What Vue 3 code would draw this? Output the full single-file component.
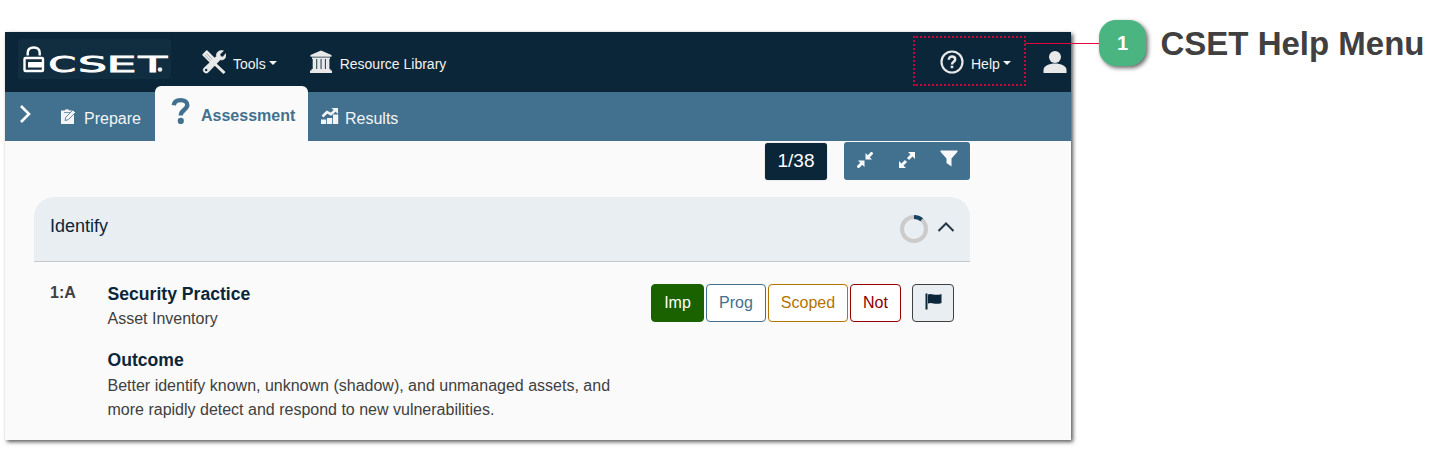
<script setup>
const letters = [
  { ch: 'C', x: 30.5, w: 27.5 },
  { ch: 'S', x: 60, w: 29 },
  { ch: 'E', x: 88.5, w: 30 },
  { ch: 'T', x: 120.5, w: 28.5 },
]
const answers = [
  { label: 'Imp', kind: 'imp' },
  { label: 'Prog', kind: 'prog' },
  { label: 'Scoped', kind: 'scoped' },
  { label: 'Not', kind: 'not' },
]
</script>

<template>
  <main class="page">
    <section class="window">
      <header class="topbar">
        <svg class="logo" width="153" height="40" viewBox="0 0 153 40">
          <rect width="153" height="40" rx="3" fill="#112d40" />
          <path d="M9.700 16.500V14q0-5.500 6-5.500t6 5.500v2.500" fill="none" stroke="#fff" stroke-width="2.400" />
          <rect x="6.500" y="19" width="18.500" height="13" rx="1" fill="none" stroke="#fff" stroke-width="2.400" />
          <rect x="10" y="23" width="15" height="5.500" rx=".5" fill="#fff" />
          <text v-for="l in letters" :key="l.ch" :x="l.x" y="32.500" :textLength="l.w" lengthAdjust="spacingAndGlyphs" class="mark">{{ l.ch }}</text>
          <circle cx="142" cy="30.500" r="2.300" fill="#e8edf0" />
        </svg>
        <div class="item tools">
          <svg width="24" height="24" viewBox="0 0 24 24">
            <path d="M1.200 4.800 4.800 1.200 14 10.500 10.500 14z" fill="#e9e9e9" stroke="#e9e9e9" stroke-width="1.800" stroke-linejoin="round" />
            <path d="m4.500 3.500 6 6M2.800 5l6 6" stroke="#7d8b95" stroke-width=".6" />
            <path d="m13 14 9.500 9" stroke="#e9e9e9" stroke-width="3" />
            <path d="M21.500.8 18 4.300l.6 2.200 2.200.6 3-3.500c1 4-1.800 7-5.600 6.200L6.300 22.200c-2.700 2.600-7-1.500-4.300-4.300L14.500 6.300C13.700 2.600 17.500-.3 21.500.8z" fill="#e9e9e9" stroke="#e9e9e9" stroke-width=".6" />
            <circle cx="4.200" cy="20" r="1.200" fill="#0b2639" />
          </svg>
          <span>Tools</span><i class="caret"></i>
        </div>
        <div class="item library">
          <svg width="24" height="24" viewBox="0 0 24 24" fill="#e9e9e9">
            <path d="M12 .5 22.500 5v1.800h-21V5zM3 7.500h18V9H3zM3.700 9h3.600v10H3.700zm4.500 0h3.400v10H8.200zm4.300 0h3.400v10h-3.400zm4.300 0h3.600v10h-3.600zM2.500 19h19v1.500H23V23H1v-2.500h1.500z" />
          </svg>
          <span>Resource Library</span>
        </div>
        <div class="help">
          <svg width="24" height="24" viewBox="0 0 24 24" fill="none" stroke="#e9e9e9">
            <circle cx="12" cy="12" r="10.500" stroke-width="2.200" />
            <path d="M8.800 9.700c0-2 1.300-3.100 3.200-3.100s3.200 1.200 3.200 2.800c0 2.400-3.200 2.300-3.200 5" stroke-width="2.500" />
            <path d="M12 15.700v2.500" stroke-width="2.600" />
          </svg>
          <span>Help</span><i class="caret"></i>
        </div>
        <svg class="user" width="24" height="24" viewBox="0 0 24 24" fill="#e9e9e9">
          <circle cx="12" cy="7" r="6" /><path d="M.5 23v-3C.5 16 6 13.500 12 13.500S23.500 16 23.500 20v3z" />
        </svg>
      </header>

      <nav class="tabs">
        <svg class="chev" width="14" height="20" viewBox="0 0 14 20"><path d="m2 2 8 8-8 8" fill="none" stroke="#fff" stroke-width="2.600" /></svg>
        <div class="tab prepare">
          <svg width="17" height="17" viewBox="0 0 17 17">
            <path d="M1 2.500h3.500a2.700 2 0 0 1 5 0H14V16H1z" fill="#f4f4f4" />
            <path d="m5 12.500.8-3.300L13 2l2.500 2.500-7.200 7.200z" fill="#f4f4f4" stroke="#41718f" stroke-width=".8" />
            <path d="M4 4.500h6" stroke="#41718f" stroke-width=".7" />
          </svg>
          <span>Prepare</span>
        </div>
        <div class="tab active">
          <svg width="20" height="28" viewBox="0 0 20 28" fill="none">
            <path d="M2.800 8.200c.4-3.500 3-5.100 6.800-5.100 4.200 0 6.700 1.900 6.700 5 0 4.700-6.500 4.700-6.500 10.400" stroke="#41718f" stroke-width="4.400" />
            <circle cx="9.800" cy="23.900" r="3.100" fill="#41718f" />
          </svg>
          <span>Assessment</span>
        </div>
        <div class="tab results">
          <svg width="18" height="17" viewBox="0 0 18 17" fill="#f4f4f4">
            <path d="M0 11.500h5.200V16H0zm6-1.500h5.200v6H6zm6-3.500h5.200V16H12z" />
            <path d="m1.500 8.500 4.500-4.500 4 2.200 4-3.700" fill="none" stroke="#f4f4f4" stroke-width="2.600" /><path d="M10.500 0H17v6z" />
          </svg>
          <span>Results</span>
        </div>
      </nav>

      <div class="toolbar">
        <div class="count">1/38</div>
        <div class="group">
          <button><svg width="16" height="16" viewBox="0 0 16 16" fill="#fafafa" stroke="#fafafa"><path d="M8.500 7.500v-6.500l6.500 6.500zM7.500 8.500V15L1 8.500z" stroke="none" /><path d="m11 5 4.500-4.500M5 11 .5 15.500" stroke-width="3" /></svg></button>
          <button><svg width="16" height="16" viewBox="0 0 16 16" fill="#fafafa" stroke="#fafafa"><path d="M9 0h7v7zM0 9v7h7z" stroke="none" /><path d="m9 7 4-4M7 9l-4 4" stroke-width="3" /></svg></button>
          <button><svg width="18" height="18" viewBox="0 0 18 18" fill="#fafafa"><path d="M.5.500h17v1.300l-6 6.700v8L6.500 13V8.500l-6-6.700z" /></svg></button>
        </div>
      </div>

      <article class="card">
        <div class="card-head">
          <h2>Identify</h2>
          <svg width="28" height="28" viewBox="0 0 28 28" fill="none" stroke-width="4">
            <circle cx="14" cy="14" r="12" stroke="#cbcbcb" /><path d="M14 2a12 12 0 0 1 7.700 2.800" stroke="#174363" />
          </svg>
          <svg class="up" width="18" height="12" viewBox="0 0 18 12"><path d="m1.500 10 7.500-7.500 7.500 7.500" fill="none" stroke="#263642" stroke-width="2" /></svg>
        </div>
        <div class="question">
          <div class="number">1:A</div>
          <div class="body">
            <h3>Security Practice</h3>
            <p>Asset Inventory</p>
            <h3 class="outcome">Outcome</h3>
            <p class="text">Better identify known, unknown (shadow), and unmanaged assets, and more rapidly detect and respond to new vulnerabilities.</p>
          </div>
          <div class="answers">
            <button v-for="a in answers" :key="a.kind" :class="a.kind">{{ a.label }}</button>
            <button class="flag"><svg width="17" height="17" viewBox="0 0 17 17" fill="#0b2639"><path d="M.5.500h2v16h-2zM3 1.500c4-2 6 2 13.500-.5v9C10 12.500 7 8.500 3 10.500z" /></svg></button>
          </div>
        </div>
      </article>
    </section>

    <aside class="callout">
      <span class="badge">1</span>
      <h1>CSET Help Menu</h1>
      <i class="connector"></i>
    </aside>
  </main>
</template>

<style>
body { margin: 0; background: #fff; }
</style>

<style scoped>
* { box-sizing: border-box; }
.page { display: flex; align-items: flex-start; width: 1449px; height: 449px; overflow: hidden; font-family: "Liberation Sans", Arial, sans-serif; color: #404040; }
h1, h2, h3, p { margin: 0; }
svg { display: block; flex: none; }
button { font: inherit; }
.window { flex: none; width: 1066px; height: 408px; margin: 32px 0 0 5px; background: #fafafa; box-shadow: 2px 2px 4px rgba(0, 0, 0, .65); }
.topbar { display: flex; align-items: flex-start; height: 60px; background: #0b2639; color: #f3f3f3; font-size: 14px; line-height: 20px; }
.logo { margin: 7px 0 0 13px; }
.mark { font: 21px "DejaVu Sans", sans-serif; fill: #fff; stroke: #fff; stroke-width: .8px; }
.item { display: flex; padding-top: 18px; }
.item span { margin: 4px 0 0 7px; }
.tools { margin-left: 31px; }
.library { margin-left: 32px; }
.caret { width: 0; height: 0; margin: 11px 0 0 3px; border: 4px solid transparent; border-top-color: #f3f3f3; border-bottom: 0; }
.help { display: flex; width: 113px; height: 50px; margin: 4px 0 0 auto; padding: 12px 0 0 25px; border: 2px dotted #c3073f; }
.help span { margin: 4px 0 0 7px; }
.user { margin: 18px 4px 0 17px; }
.tabs { display: flex; align-items: flex-start; height: 49px; background: #41718f; color: #f4f4f4; font-size: 16px; line-height: 20px; }
.chev { margin: 12px 0 0 14px; }
.tab { display: flex; }
.prepare { margin: 16px 0 0 27px; width: 95px; }
.prepare span { margin: 1px 0 0 7px; }
.active { width: 153px; height: 55px; margin-top: -6px; padding: 11px 0 0 16px; border-radius: 6px 6px 0 0; background: #fafafa; color: #41718f; font-weight: bold; }
.active span { margin: 9px 0 0 10px; }
.results { margin: 16px 0 0 13px; }
.results span { margin: 1px 0 0 6px; }
.toolbar { display: flex; align-items: flex-start; height: 56px; padding-left: 760px; }
.count { width: 62px; height: 37px; margin: 2px 17px 0 0; border-radius: 3px; background: #0b2639; color: #fff; text-align: center; font-size: 19px; line-height: 35px; box-shadow: 0 0 1px rgba(0, 0, 0, .5); }
.group { display: flex; height: 38px; margin-top: 1px; border-radius: 3px; overflow: hidden; background: #41718f; }
.group button { width: 42px; height: 38px; padding: 0; border: 0; background: none; display: flex; justify-content: center; padding-top: 10px; }
.group button:last-child { padding-top: 8px; }
.card { width: 936px; margin-left: 29px; }
.card-head { display: flex; align-items: flex-start; height: 65px; padding: 18px 15px 0 16px; border-radius: 20px 20px 0 0; border-bottom: 1px solid #c5cace; background: #e9eef2; }
.card-head h2 { flex: 1; color: #0b2639; font-size: 18px; font-weight: normal; line-height: 22px; }
.up { margin: 6px 0 0 9px; }
.question { display: flex; align-items: flex-start; padding: 19px 16px 0; font-size: 16px; line-height: 24px; }
.number { width: 57.5px; font-weight: bold; }
.body { width: 515px; padding-top: 1px; }
.body h3 { color: #0b2639; font-size: 17.6px; line-height: 24px; }
.body p { line-height: 24px; margin-top: 1px; }
.body .outcome { margin-top: 17px; }
.body .text { margin-top: 2px; }
.answers { display: flex; gap: 2px; margin: 3px 0 0 auto; }
.answers button { height: 38px; padding: 0 0 1px; border: 1px solid; border-radius: 4px; background: #fff; line-height: 34px; }
.answers .imp { width: 53px; background: #1a6100; border-color: #1a6100; color: #fff; }
.answers .prog { width: 60px; color: #41718f; }
.answers .scoped { width: 80px; color: #b17500; }
.answers .not { width: 51px; color: #8b0000; border-color: #940000; }
.answers .flag { display: flex; justify-content: center; width: 42px; margin-left: 9px; padding-top: 8px; background: #e9eef2; border-color: #404040; }
.callout { position: relative; display: flex; align-items: flex-start; margin: 20px 0 0 28px; }
.badge { width: 47px; height: 46px; border-radius: 17px; background: #4ab580; color: #fff; text-align: center; font-size: 20px; font-weight: bold; line-height: 46px; box-shadow: 2px 2px 4px rgba(0, 0, 0, .6); }
.callout h1 { margin: 1px 0 0 14.5px; color: #404040; font-size: 33px; line-height: 46px; white-space: nowrap; }
.connector { position: absolute; left: -74px; top: 23px; width: 74px; height: 1px; background: #e0073f; }
</style>
